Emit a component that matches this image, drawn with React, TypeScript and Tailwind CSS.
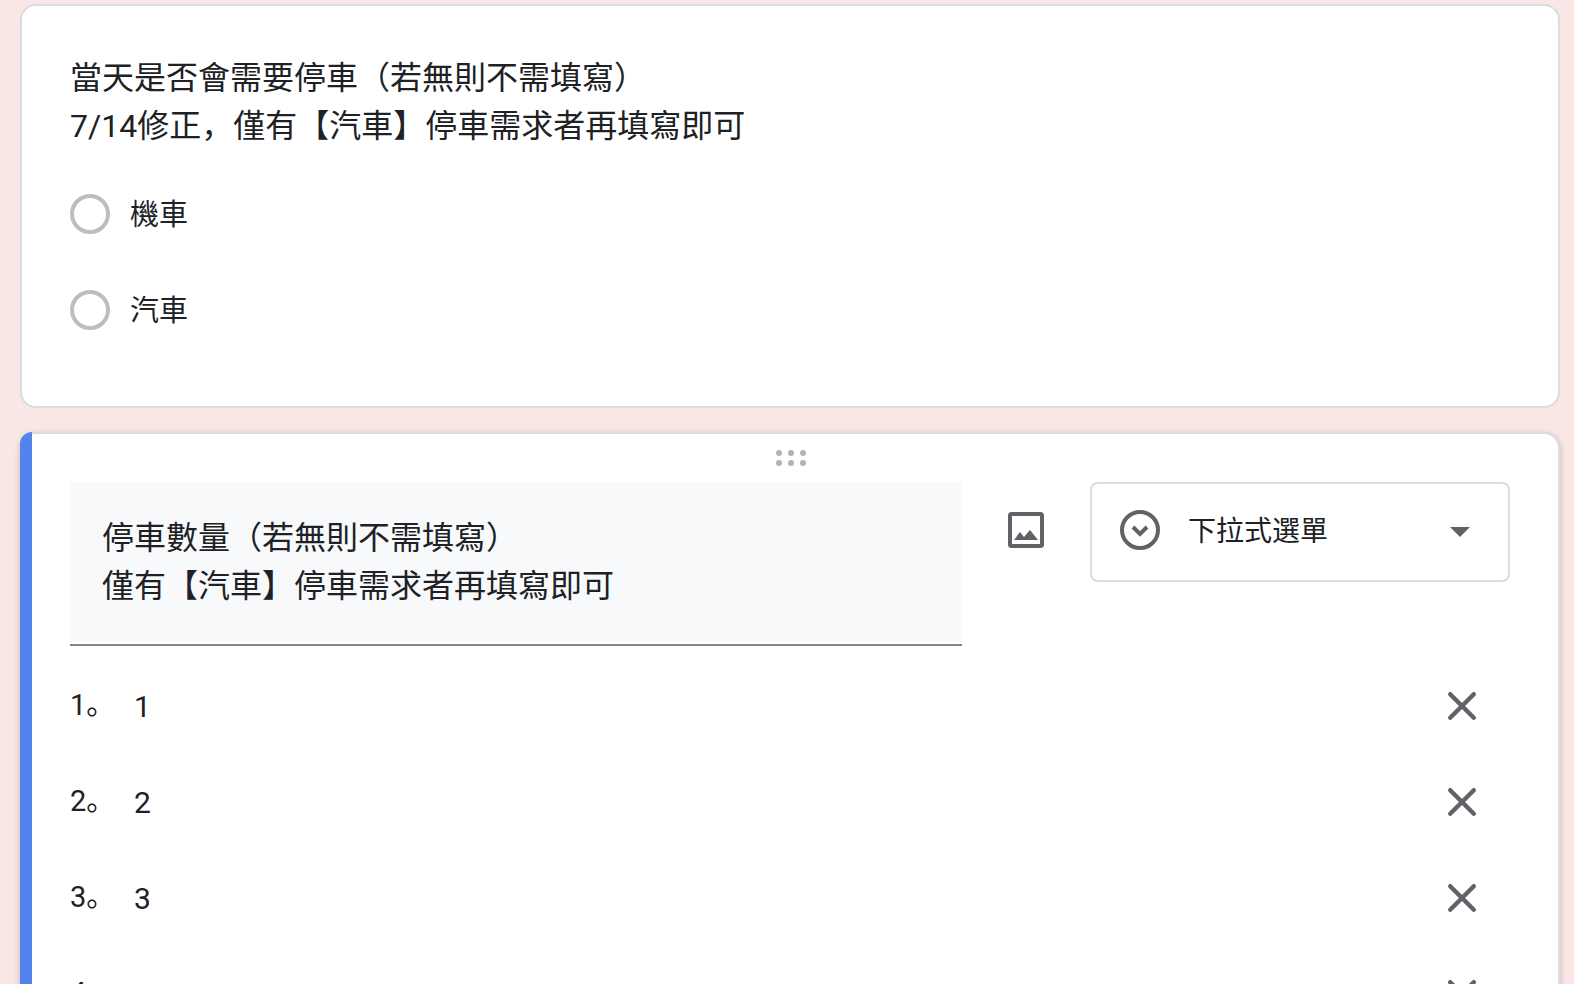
import React, { useState } from 'react';

type Option = { id: number; value: string };

const parkingTypes = ['機車', '汽車'];
const questionTypes = ['下拉式選單'];

function DragHandle() {
  return (
    <svg width="30" height="16" viewBox="0 0 30 16" fill="#b3b3b3" aria-hidden="true">
      {[3, 15, 27].map((x) => (
        <React.Fragment key={x}>
          <circle cx={x} cy="3" r="3" />
          <circle cx={x} cy="13" r="3" />
        </React.Fragment>
      ))}
    </svg>
  );
}

function ImageIcon() {
  return (
    <svg width="48" height="48" viewBox="0 0 48 48" fill="#5f6368" aria-hidden="true">
      <rect x="8" y="8" width="32" height="32" rx="1.5" fill="none" stroke="#5f6368" strokeWidth="4" />
      <path d="M12 34l6-8 4 5 6-7 8 10z" />
    </svg>
  );
}

function DropdownCircleIcon() {
  return (
    <svg width="40" height="44" viewBox="0 0 40 44" fill="none" stroke="#5f6368" aria-hidden="true">
      <circle cx="20" cy="20" r="18" strokeWidth="4" />
      <path d="M13 17l7 7 7-7" strokeWidth="4" />
    </svg>
  );
}

function CloseIcon() {
  return (
    <svg width="48" height="48" viewBox="0 0 24 24" stroke="#5f6368" strokeWidth="2.2" strokeLinecap="round" aria-hidden="true">
      <path d="M6.1 6.1l11.8 11.8M17.9 6.1L6.1 17.9" />
    </svg>
  );
}

function ParkingQuestion() {
  const [selected, setSelected] = useState('');

  return (
    <section className="rounded-2xl border-2 border-[#dadce0] bg-white px-12 pt-12 pb-12">
      <fieldset>
        <legend className="mb-4 text-[32px] leading-[48px]">
          當天是否會需要停車（若無則不需填寫）
          <br />
          7/14修正，僅有【汽車】停車需求者再填寫即可
        </legend>
        {parkingTypes.map((type) => (
          <label key={type} className="flex h-24 items-center gap-5 text-[29px]">
            <input
              type="radio"
              name="parking"
              value={type}
              checked={selected === type}
              onChange={() => setSelected(type)}
              className="size-10 appearance-none rounded-full border-4 border-[#bdbdbd] checked:border-[#5383ec]"
            />
            <span className="pt-1">{type}</span>
          </label>
        ))}
      </fieldset>
    </section>
  );
}

function OptionRow({ option, index, onChange, onRemove }: {
  option: Option;
  index: number;
  onChange: (value: string) => void;
  onRemove: () => void;
}) {
  return (
    <li className="flex h-24 items-center pr-6">
      <label htmlFor={`option-${option.id}`} className="w-16 text-[29px]">
        {index + 1}。
      </label>
      <input
        id={`option-${option.id}`}
        type="text"
        value={option.value}
        onChange={(e) => onChange(e.target.value)}
        className="min-w-0 flex-1 text-[30px] outline-none"
      />
      <button type="button" aria-label="移除選項" onClick={onRemove}>
        <CloseIcon />
      </button>
    </li>
  );
}

function AmountQuestion() {
  const [title, setTitle] = useState('停車數量（若無則不需填寫）\n僅有【汽車】停車需求者再填寫即可');
  const [options, setOptions] = useState<Option[]>([
    { id: 1, value: '1' },
    { id: 2, value: '2' },
    { id: 3, value: '3' },
    { id: 4, value: '4' },
  ]);

  const updateOption = (id: number, value: string) => {
    setOptions(options.map((o) => (o.id === id ? { ...o, value } : o)));
  };

  return (
    <section className="relative rounded-2xl border-2 border-[#dadce0] bg-white px-12 pb-12 shadow-[0_2px_6px_rgba(0,0,0,0.2)]">
      {/* Active question marker */}
      <div className="absolute -top-0.5 -bottom-0.5 -left-0.5 w-3 rounded-l-xl bg-[#5383ec]" />

      <div className="flex h-12 items-center justify-center pl-0.5">
        <DragHandle />
      </div>

      <div className="flex items-start gap-10">
        <div className="flex-1 border-b-2 border-[#80868b] pb-0.5">
          <textarea
            aria-label="問題"
            rows={2}
            value={title}
            onChange={(e) => setTitle(e.target.value)}
            className="block w-full resize-none bg-[#f8f9fb] p-8 text-[32px] leading-[48px] outline-none"
          />
        </div>
        <button type="button" aria-label="新增圖片" className="mt-6">
          <ImageIcon />
        </button>
        <div className="relative w-[420px]">
          <select
            aria-label="問題類型"
            className="h-[100px] w-full appearance-none rounded-lg border-2 border-[#dadce0] bg-white pl-24 text-[28px] outline-none"
          >
            {questionTypes.map((type) => (
              <option key={type}>{type}</option>
            ))}
          </select>
          <div className="pointer-events-none absolute inset-0 flex items-center justify-between pr-10 pl-[30px]">
            <DropdownCircleIcon />
            <svg width="20" height="12" viewBox="0 0 20 12" fill="#5f6368" aria-hidden="true">
              <path d="M0 1h20L10 11z" />
            </svg>
          </div>
        </div>
      </div>

      <ol className="mt-3">
        {options.map((option, index) => (
          <OptionRow
            key={option.id}
            option={option}
            index={index}
            onChange={(value) => updateOption(option.id, value)}
            onRemove={() => setOptions(options.filter((o) => o.id !== option.id))}
          />
        ))}
      </ol>
    </section>
  );
}

export default function App() {
  return (
    <main className="flex h-screen flex-col gap-6 overflow-hidden bg-[#f8e7e4] pt-1 pr-3.5 pl-5 font-[Roboto,'Noto_Sans_CJK_SC',sans-serif] text-[#202124]">
      <ParkingQuestion />
      <AmountQuestion />
    </main>
  );
}
